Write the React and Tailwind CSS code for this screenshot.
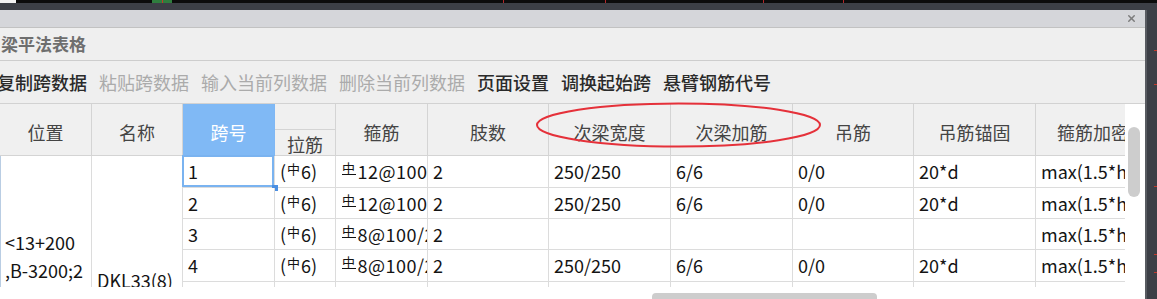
import React from 'react';
import { X } from 'lucide-react';

const grid = 'grid grid-cols-[92px_91px_92px_61px_92px_121px_122px_122px_121px_122px_89px] grid-rows-[26px_26px_32px_31px_31px_32px_31px]';

// HPB300 steel mark, raised and small
function Hpb() {
    return <span className="relative -top-[3px] mx-[1px] text-[13px] leading-none">中</span>;
}

// HRB400 steel mark: same glyph with a bar under it
function Hrb() {
    return (
        <span className="relative -top-[3px] mr-[2px] inline-block border-b border-[#111] text-[13px] leading-[12px]">中</span>
    );
}

const rows = [
    { no: '1', gu: '12@100/200(2)', zhi: '2', kuan: '250/250', jia: '6/6', diao: '0/0', mao: '20*d', mi: 'max(1.5*hb,500)' },
    { no: '2', gu: '12@100/200(2)', zhi: '2', kuan: '250/250', jia: '6/6', diao: '0/0', mao: '20*d', mi: 'max(1.5*hb,500)' },
    { no: '3', gu: '8@100/200(2)', zhi: '2', kuan: '', jia: '', diao: '', mao: '', mi: 'max(1.5*hb,500)' },
    { no: '4', gu: '8@100/200(2)', zhi: '2', kuan: '250/250', jia: '6/6', diao: '0/0', mao: '20*d', mi: 'max(1.5*hb,500)' },
    { no: '5', gu: '8@100/200(2)', zhi: '2', kuan: '250/250', jia: '6/6', diao: '0/0', mao: '20*d', mi: 'max(1.5*hb,500)' },
];

const cell = 'flex items-center overflow-hidden whitespace-nowrap border-r border-b border-[#dcdcdc] pl-[5px] bg-white';
const head = 'flex items-center justify-center pt-[5px] border-r border-b border-[#d4d4d4] bg-[#f0f0f0] text-[#444]';

export default function App() {
    return (
        <div className="relative h-[299px] w-[1157px] overflow-hidden bg-[#3c3f46] font-['Noto_Sans_CJK_SC',sans-serif] text-[18px]">
            {/* strip of the drawing behind the dialog */}
            <div className="relative h-[3px] bg-[#0b0b0b]">
                <div className="absolute left-0 top-0 h-[3px] w-[16px] bg-[#f2f2f2]" />
                <div className="absolute left-[152px] top-0 h-[3px] w-[20px] bg-[#2f7d3e]" />
                <div className="absolute left-[162px] top-0 h-[3px] w-px bg-[#c0392b]" />
                <div className="absolute left-[503px] top-0 h-[3px] w-px bg-[#b3262a]" />
                <div className="absolute left-[605px] top-0 h-[3px] w-px bg-[#b3262a]" />
                <div className="absolute left-[763px] top-0 h-[3px] w-px bg-[#b3262a]" />
                <div className="absolute left-[843px] top-0 h-[3px] w-px bg-[#b3262a]" />
            </div>
            {['top-[50px]', 'top-[84px]', 'top-[186px]', 'top-[254px]', 'top-[272px]'].map(t => (
                <div key={t} className={`absolute right-0 h-px w-[3px] bg-[#c0392b] ${t}`} />
            ))}

            {/* dialog */}
            <div className="mt-[7px] flex h-[289px] w-[1147px] flex-col border-r-2 border-[#585b61] bg-[#efefef]">
                <div className="flex h-[18px] shrink-0 items-center justify-end border-b border-[#c2c2c2] bg-[#d5d6da] pr-[8px]">
                    <X size={11} strokeWidth={3.2} className="text-[#7c7c7c]" />
                </div>
                <div className="flex h-[33px] shrink-0 items-center border-b border-[#cdcdcd] pl-[1px] text-[17px] font-bold text-[#6e6e6e]">
                    梁平法表格
                </div>
                <div className="-ml-[3px] flex h-[43px] shrink-0 items-center gap-[12px] border-b border-[#d2d2d2] text-[#2a2a2a]">
                    <span className="font-medium">复制跨数据</span>
                    <span className="text-[#ababab]">粘贴跨数据</span>
                    <span className="text-[#ababab]">输入当前列数据</span>
                    <span className="text-[#ababab]">删除当前列数据</span>
                    <span className="font-medium">页面设置</span>
                    <span className="font-medium">调换起始跨</span>
                    <span className="font-medium">悬臂钢筋代号</span>
                </div>

                <div className="relative flex min-h-0 flex-1 flex-col bg-white">
                    <div className="h-[184px] overflow-hidden">
                        <div className={`${grid} w-[1125px] text-[#141414]`}>
                            <div className={`${head} row-span-2`}>位置</div>
                            <div className={`${head} row-span-2`}>名称</div>
                            <div className="row-span-2 flex items-center justify-center border-r border-b border-[#7fb7f4] bg-[#80b9f5] pt-[5px] text-white">跨号</div>
                            <div className="border-r border-b border-[#d4d4d4] bg-[#f0f0f0]" />
                            <div className={`${head} row-span-2`}>箍筋</div>
                            <div className={`${head} row-span-2`}>肢数</div>
                            <div className={`${head} row-span-2`}>次梁宽度</div>
                            <div className={`${head} row-span-2`}>次梁加筋</div>
                            <div className={`${head} row-span-2`}>吊筋</div>
                            <div className={`${head} row-span-2`}>吊筋锚固</div>
                            <div className="row-span-2 flex items-center overflow-hidden whitespace-nowrap border-b border-[#d4d4d4] bg-[#f0f0f0] pl-[21px] pt-[5px] text-[#444]">箍筋加密区长度</div>
                            <div className="flex items-center justify-center border-r border-b border-[#d4d4d4] bg-[#f0f0f0] pt-[3px] text-[#444]">拉筋</div>

                            <div className="row-span-5 overflow-hidden border-r border-b border-l border-[#dcdcdc] border-l-[#b9cde3] pl-[4px] pt-[72px] leading-[28px]">
                                &lt;13+200
                                <br />
                                ,B-3200;2
                                <br />
                                4400&gt;
                            </div>
                            <div className="row-span-5 overflow-hidden border-r border-b border-[#dcdcdc] pl-[5px] pt-[110px] leading-[28px]">DKL33(8)</div>

                            {rows.map((r, i) => (
                                <React.Fragment key={r.no}>
                                    <div className={`${cell} relative overflow-visible`}>
                                        {r.no}
                                        {i === 0 && (
                                            <>
                                                <div className="absolute -left-px -top-px bottom-0 right-0 border-2 border-[#7ab3f0]" />
                                                <div className="absolute -bottom-[4px] -right-[4px] h-[6px] w-[6px] bg-[#4b8fe2]" />
                                            </>
                                        )}
                                    </div>
                                    <div className={cell}>(<Hpb />6)</div>
                                    <div className={`${cell} pl-[6px] tracking-[0.5px]`}><Hrb />{r.gu}</div>
                                    <div className={cell}>{r.zhi}</div>
                                    <div className={cell}>{r.kuan}</div>
                                    <div className={cell}>{r.jia}</div>
                                    <div className={cell}>{r.diao}</div>
                                    <div className={cell}>{r.mao}</div>
                                    <div className={`${cell} border-r-0`}>{r.mi}</div>
                                </React.Fragment>
                            ))}
                        </div>
                    </div>
                    <div className="ml-[652px] mt-[6px] h-[6px] w-[225px] rounded-t-[4px] bg-[#cdcdcd]" />
                    {/* vertical scrollbar */}
                    <div className="absolute left-[1128px] top-[23px] h-[70px] w-[12px] rounded-[6px] bg-[#cdcdcd]" />
                </div>
            </div>

            {/* red mark drawn over the screenshot */}
            <svg className="pointer-events-none absolute left-0 top-0" width="1157" height="299">
                <ellipse cx="678.5" cy="125" rx="141.5" ry="21.5" fill="none" stroke="#e5313a" strokeWidth="2" />
            </svg>
        </div>
    );
}
